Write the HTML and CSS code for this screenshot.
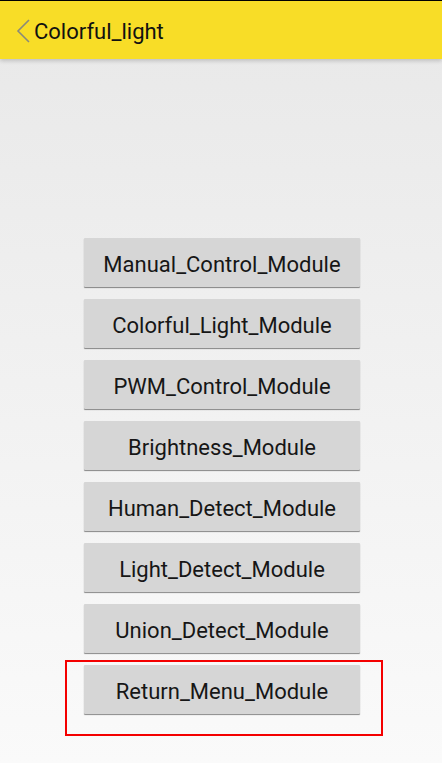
FILE: index.html
```html
<!DOCTYPE html>
<html>
<head>
<meta charset="utf-8">
<link rel="stylesheet" href="styles.css">
</head>
<body>
<div class="screen">
  <header class="bar">
    <svg class="back" width="16" height="26" viewBox="0 0 16 26"><polyline points="13,2 2,13 13,24" fill="none" stroke="#8a8a7a" stroke-width="1.6"/></svg>
    <span class="title">Colorful_light</span>
  </header>
  <main class="list">
    <div class="btn">Manual_Control_Module</div>
    <div class="btn">Colorful_Light_Module</div>
    <div class="btn">PWM_Control_Module</div>
    <div class="btn">Brightness_Module</div>
    <div class="btn">Human_Detect_Module</div>
    <div class="btn">Light_Detect_Module</div>
    <div class="btn">Union_Detect_Module</div>
    <div class="highlight">
      <div class="btn">Return_Menu_Module</div>
    </div>
  </main>
</div>
</body>
</html>
```

FILE: styles.css
```css
html, body {
  margin: 0;
  padding: 0;
}
body {
  width: 442px;
  height: 763px;
  overflow: hidden;
  font-family: Roboto, "Noto Sans", sans-serif;
}
.screen {
  height: 763px;
  background: linear-gradient(#e8e8e8, #fafafa);
  border-top: 1px solid #000;
  box-sizing: border-box;
}
.bar {
  height: 58px;
  background: #f8dd27;
  display: flex;
  align-items: center;
  padding-left: 16px;
  box-shadow: 0 2px 4px rgba(0,0,0,0.18);
  position: relative;
}
.back {
  display: block;
  margin-right: 2px;
  margin-top: 1px;
}
.title {
  font-size: 22px;
  color: #111;
  margin-top: 3px;
}
.list {
  display: flex;
  flex-direction: column;
  align-items: center;
  gap: 12px;
  padding-top: 179px;
}
.btn {
  width: 276px;
  height: 49px;
  margin-left: 2px;
  background: #d6d6d6;
  box-shadow: 0 1px 1px rgba(0,0,0,0.45);
  border-radius: 1px;
  display: flex;
  align-items: center;
  justify-content: center;
  font-size: 22px;
  color: #161616;
  box-sizing: border-box;
  padding-top: 4px;
}
.highlight {
  margin-top: -5px;
  margin-left: 6px;
  width: 297px;
  height: 69px;
  border: 2px solid #f40000;
  padding: 3px 0 0 17px;
  box-sizing: content-box;
}
.highlight .btn {
  margin: 0;
}
```
